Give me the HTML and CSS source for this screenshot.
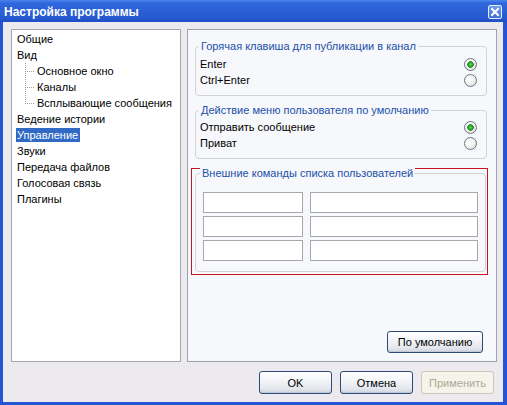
FILE: index.html
```html
<!DOCTYPE html>
<html>
<head>
<meta charset="utf-8">
<link rel="stylesheet" href="styles.css">
</head>
<body>
<div class="window">
  <div class="titlebar">
    <span class="title">Настройка программы</span>
    <span class="close"><svg width="12" height="12" viewBox="0 0 12 12"><path d="M3 3 L9 9 M9 3 L3 9" stroke="#fff" stroke-width="2" stroke-linecap="square"/></svg></span>
  </div>
  <div class="frame">
    <div class="content">
      <div class="tree">
        <div class="node"><span>Общие</span></div>
        <div class="node"><span>Вид</span></div>
        <div class="node child"><span>Основное окно</span></div>
        <div class="node child"><span>Каналы</span></div>
        <div class="node child last"><span>Всплывающие сообщения</span></div>
        <div class="node"><span>Ведение истории</span></div>
        <div class="node"><span class="selected">Управление</span></div>
        <div class="node"><span>Звуки</span></div>
        <div class="node"><span>Передача файлов</span></div>
        <div class="node"><span>Голосовая связь</span></div>
        <div class="node"><span>Плагины</span></div>
      </div>
      <div class="panel">
        <div class="group g1">
          <div class="legend">Горячая клавиша для публикации в канал</div>
          <div class="rows">
            <div class="row"><span>Enter</span><span class="radio checked"></span></div>
            <div class="row"><span>Ctrl+Enter</span><span class="radio"></span></div>
          </div>
        </div>
        <div class="group g2">
          <div class="legend">Действие меню пользователя по умолчанию</div>
          <div class="rows">
            <div class="row"><span>Отправить сообщение</span><span class="radio checked"></span></div>
            <div class="row"><span>Приват</span><span class="radio"></span></div>
          </div>
        </div>
        <div class="highlight">
          <div class="group g3">
            <div class="legend l3">Внешние команды списка пользователей</div>
            <div class="fields">
              <span class="field"></span><span class="field"></span>
              <span class="field"></span><span class="field"></span>
              <span class="field"></span><span class="field"></span>
            </div>
          </div>
        </div>
        <div class="panel-foot">
          <button class="btn wide">По умолчанию</button>
        </div>
      </div>
    </div>
    <div class="buttons">
      <button class="btn">OK</button>
      <button class="btn">Отмена</button>
      <button class="btn disabled">Применить</button>
    </div>
  </div>
</div>
</body>
</html>
```
FILE: styles.css
```css
html, body {
  margin: 0;
  padding: 0;
  width: 507px;
  height: 405px;
  overflow: hidden;
}
body {
  font-family: "Liberation Sans", Arial, sans-serif;
  font-size: 11px;
  color: #000;
}
.window {
  width: 507px;
  height: 405px;
  display: flex;
  flex-direction: column;
  background: #2355d6;
}
.titlebar {
  height: 22px;
  flex: none;
  display: flex;
  align-items: center;
  justify-content: space-between;
  padding: 0 5px 0 4px;
  background: linear-gradient(#4a86ee 0, #2f67dc 3px, #2a5fd6 12px, #2557cf 19px, #1f4cc0 22px);
}
.title {
  color: #fff;
  font-weight: bold;
  font-size: 12px;
  padding-top: 1px;
}
.close {
  width: 12px;
  height: 12px;
  border: 1px solid #e8eefc;
  border-radius: 2px;
  background: linear-gradient(#6f9bf0, #3c6fdc);
  display: flex;
  align-items: center;
  justify-content: center;
  margin-top: 1px;
}
.close svg { display: block; }
.frame {
  flex: 1;
  margin: 0 4px 3px 3px;
  background: #eceaef;
  padding: 7px 6px 8px 8px;
  display: flex;
  flex-direction: column;
}
.content {
  height: 333px;
  display: flex;
  gap: 6px;
}
.tree {
  width: 170px;
  box-sizing: border-box;
  background: #fff;
  border: 1px solid #a7a6aa;
  padding-top: 1px;
}
.node {
  height: 16px;
  line-height: 16px;
  padding-left: 4px;
  white-space: nowrap;
}
.node span {
  display: inline-block;
  padding: 0 1px;
  line-height: 14px;
  height: 14px;
  margin-top: 1px;
  vertical-align: top;
}
.node.child {
  padding-left: 24px;
  background-image:
    repeating-linear-gradient(to bottom, #a0a0a0 0 1px, transparent 1px 2px),
    repeating-linear-gradient(to right, #a0a0a0 0 1px, transparent 1px 2px);
  background-repeat: no-repeat;
  background-size: 1px 16px, 8px 1px;
  background-position: 13px 0, 15px 8px;
}
.node.child.last {
  background-size: 1px 9px, 8px 1px;
}
.node .selected {
  background: #316ac5;
  color: #fff;
  padding: 0 2px 0 1px;
}
.panel {
  flex: 1;
  box-sizing: border-box;
  border: 1px solid #9ca3ae;
  background: #f7f8fc;
  display: flex;
  flex-direction: column;
}
.group {
  box-sizing: border-box;
  border: 1px solid #d3d3d0;
  border-radius: 4px;
  display: flex;
  flex-direction: column;
}
.g1 {
  margin: 16px 9px 0 7px;
  height: 50px;
}
.g2 {
  margin: 14px 9px 0 7px;
  height: 49px;
}
.legend {
  align-self: flex-start;
  margin: -7px 0 0 3px;
  padding: 0 2px;
  line-height: 13px;
  height: 13px;
  color: #2150a8;
  background: #f7f8fc;
  white-space: nowrap;
}
.l3 { margin-left: 4px; }
.rows { padding-top: 2px; }
.g1 .rows { padding-top: 3px; }
.row {
  height: 16px;
  display: flex;
  align-items: center;
  justify-content: space-between;
  padding: 0 9px 0 4px;
}
.radio {
  width: 13px;
  height: 13px;
  box-sizing: border-box;
  border-radius: 50%;
  border: 1px solid #6b7584;
  background: radial-gradient(circle at 35% 35%, #ffffff 0, #f3f3ef 45%, #d7d6cf 100%);
}
.radio.checked {
  background:
    radial-gradient(circle at 50% 50%, #6bd06b 0, #2ea52e 2px, #1d8f1d 3px, transparent 3.5px),
    radial-gradient(circle at 35% 35%, #ffffff 0, #f3f3ef 45%, #d7d6cf 100%);
}
.highlight {
  margin: 9px 8px 0 3px;
  border: 1px solid #c8141e;
  padding: 4px 1px 2px 3px;
}
.g3 {
  height: 99px;
}
.fields {
  margin: 12px 0 0 7px;
  display: grid;
  grid-template-columns: 100px 168px;
  grid-auto-rows: 21px;
  column-gap: 7px;
  row-gap: 3px;
}
.field {
  box-sizing: border-box;
  border: 1px solid #a5a9ae;
  background: #fff;
}
.panel-foot {
  margin-top: auto;
  display: flex;
  justify-content: flex-end;
  padding: 0 13px 8px 0;
}
.btn {
  font-family: "Liberation Sans", Arial, sans-serif;
  font-size: 11px;
  color: #000;
  width: 73px;
  height: 23px;
  padding: 0;
  box-sizing: border-box;
  border: 1px solid #2d4b77;
  border-radius: 3px;
  background: linear-gradient(#ffffff 0, #f4f5f8 40%, #e3e6ed 80%, #cfd4de 100%);
  box-shadow: inset 0 -1px 0 #c3c9d4;
}
.btn.wide {
  width: 96px;
  height: 22px;
}
.btn.disabled {
  color: #aca899;
  border-color: #c9c7ba;
  background: #f5f4ea;
  box-shadow: none;
}
.buttons {
  margin-top: 9px;
  display: flex;
  justify-content: flex-end;
  gap: 8px;
  padding-right: 3px;
}
```
